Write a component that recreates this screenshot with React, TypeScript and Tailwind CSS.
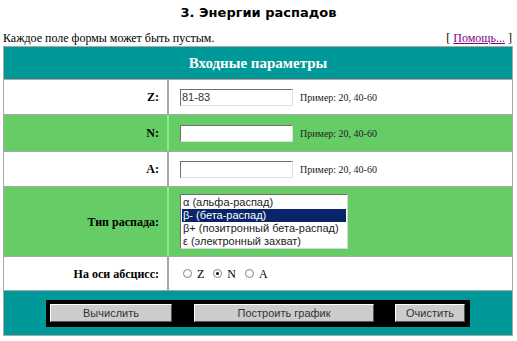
import React from 'react';

const serif = { fontFamily: '"Liberation Serif", "Times New Roman", serif' };
const sans = { fontFamily: '"Liberation Sans", Arial, sans-serif' };

function Label({ children }: { children: React.ReactNode }) {
  return (
    <div className="w-[163px] flex items-center justify-end pr-[8px] text-[12px] font-bold text-black" style={serif}>
      {children}
    </div>
  );
}

function Example() {
  return (
    <span className="ml-[7px] text-[10px] text-[#222]" style={serif}>
      Пример: 20, 40-60
    </span>
  );
}

function TextInput({ value = '' }: { value?: string }) {
  return (
    <input
      defaultValue={value}
      className="w-[113px] h-[17px] bg-white border border-t-[#707070] border-l-[#707070] border-r-[#e0e0e0] border-b-[#e0e0e0] px-[1px] text-[11px] text-[#333] outline-none"
      style={sans}
    />
  );
}

const options = [
  'α (альфа-распад)',
  'β- (бета-распад)',
  'β+ (позитронный бета-распад)',
  'ε (электронный захват)',
];

export default function App() {
  return (
    <div className="w-[517px] h-[341px] bg-white overflow-hidden">
      <h1 className="pt-[3px] h-[28px] text-center text-[13px] font-bold text-black" style={{ fontFamily: '"DejaVu Sans", Verdana, sans-serif' }}>
        3. Энергии распадов
      </h1>
      <div className="flex justify-between pl-[3px] pr-[5px] h-[18px] text-[12px] text-black leading-[20px]" style={serif}>
        <span>Каждое поле формы может быть пустым.</span>
        <span>
          [ <a href="#" className="text-[#800080] underline">Помощь...</a> ]
        </span>
      </div>

      <div className="ml-[3px] w-[510px] border border-[#a8a8a8]">
        <div className="h-[33px] bg-[#009999] border-b border-b-[#d09a9a] flex items-center justify-center text-white text-[15px] font-bold" style={serif}>
          Входные параметры
        </div>

        <div className="flex h-[35px] bg-white border-b border-[#a8a8a8]">
          <Label>Z:</Label>
          <div className="flex-1 border-l-2 border-[#a8a8a8] flex items-center pl-[11px]">
            <TextInput value="81-83" />
            <Example />
          </div>
        </div>

        <div className="flex h-[37px] bg-[#66cc66] border-b border-[#a8a8a8]">
          <Label>N:</Label>
          <div className="flex-1 border-l-2 border-l-[#80ee80] flex items-center pl-[11px]">
            <TextInput />
            <Example />
          </div>
        </div>

        <div className="flex h-[35px] bg-white border-b border-[#a8a8a8]">
          <Label>A:</Label>
          <div className="flex-1 border-l-2 border-[#a8a8a8] flex items-center pl-[11px]">
            <TextInput />
            <Example />
          </div>
        </div>

        <div className="flex h-[70px] bg-[#66cc66] border-b border-[#a8a8a8]">
          <Label>Тип распада:</Label>
          <div className="flex-1 border-l-2 border-l-[#80ee80] flex items-center pl-[11px]">
            <div className="w-[168px] h-[55px] bg-white border border-t-[#707070] border-l-[#707070] border-r-[#d8d8d8] border-b-[#d8d8d8] p-[1px] overflow-hidden" style={sans}>
              {options.map((o, i) => (
                <div
                  key={o}
                  className={
                    'h-[13px] leading-[13px] text-[11px] px-[1px] whitespace-nowrap ' +
                    (i === 1 ? 'bg-[#0a246a] text-white' : 'text-[#222]')
                  }
                >
                  {o}
                </div>
              ))}
            </div>
          </div>
        </div>

        <div className="flex h-[34px] bg-white border-b border-[#a8a8a8]">
          <Label>На оси абсцисс:</Label>
          <div className="flex-1 border-l-2 border-[#a8a8a8] flex items-center pl-[14px] text-[12px] text-black" style={serif}>
            {['Z', 'N', 'A'].map((k) => (
              <label key={k} className="flex items-center mr-[9px]">
                <span className="w-[9px] h-[9px] rounded-full border border-[#808080] bg-white flex items-center justify-center mr-[5px]">
                  {k === 'N' && <span className="w-[3px] h-[3px] rounded-full bg-black" />}
                </span>
                {k}
              </label>
            ))}
          </div>
        </div>

        <div className="h-[44px] bg-[#009999] flex items-center">
          <div className="ml-[42px] w-[424px] h-[27px] bg-black flex items-center px-[4px]" style={sans}>
            <button className="w-[122px] h-[18px] bg-[#cccccc] border border-t-white border-l-white border-r-[#555] border-b-[#555] text-[11px] text-[#333]">
              Вычислить
            </button>
            <button className="ml-[22px] w-[180px] h-[18px] bg-[#cccccc] border border-t-white border-l-white border-r-[#555] border-b-[#555] text-[11px] text-[#333]">
              Построить график
            </button>
            <button className="ml-[21px] w-[70px] h-[18px] bg-[#cccccc] border border-t-white border-l-white border-r-[#555] border-b-[#555] text-[11px] text-[#333]">
              Очистить
            </button>
          </div>
        </div>
      </div>
    </div>
  );
}
